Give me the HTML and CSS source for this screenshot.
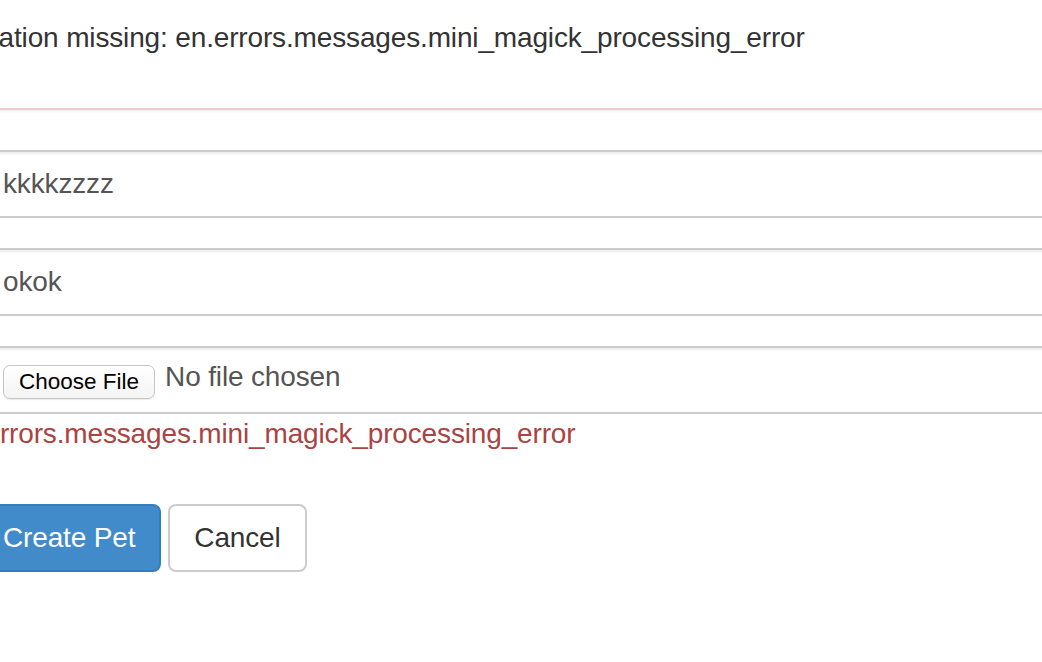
FILE: index.html
```html
<!DOCTYPE html>
<html lang="en">
<head>
<meta charset="utf-8">
<title>New Pet</title>
<link rel="stylesheet" href="styles.css">
</head>
<body>
<div class="container">
  <div class="panel">
    <div class="panel-msg">translation missing: en.errors.messages.mini_magick_processing_error</div>
  </div>
  <form class="pet-form">
    <div class="form-group">
      <input class="form-control" type="text" value="kkkkzzzz">
    </div>
    <div class="form-group">
      <input class="form-control" type="text" value="okok">
    </div>
    <div class="form-group">
      <div class="form-control file-control">
        <button type="button" class="file-btn">Choose File</button>
        <span class="file-name">No file chosen</span>
      </div>
      <div class="help-block">en.errors.messages.mini_magick_processing_error</div>
    </div>
    <div class="actions">
      <button type="button" class="btn btn-primary">Create Pet</button>
      <button type="button" class="btn btn-default">Cancel</button>
    </div>
  </form>
</div>
</body>
</html>
```
FILE: styles.css
```css
html, body {
  margin: 0;
  padding: 0;
  background: #fff;
  overflow: hidden;
}
body {
  font-family: "Liberation Sans", Arial, Helvetica, sans-serif;
  font-size: 28px;
  line-height: 40px;
  color: #333;
  letter-spacing: -0.15px;
}
.container {
  margin-left: -23px;
  width: 1200px;
}
.panel {
  padding: 18px 0 50px;
  border-bottom: 2px solid #ebccd1;
  box-shadow: 0 2px 2px rgba(0, 0, 0, 0.05);
  margin-bottom: 40px;
}
.panel-msg {
  margin-left: -46px;
  white-space: nowrap;
}
.pet-form {
  margin: 0;
}
.form-group {
  margin-bottom: 30px;
}
.form-control {
  display: block;
  box-sizing: border-box;
  width: 100%;
  height: 68px;
  margin: 0;
  padding: 12px 24px;
  border: 2px solid #ccc;
  border-radius: 8px;
  box-shadow: inset 0 2px 2px rgba(0, 0, 0, 0.075);
  font-family: inherit;
  font-size: 28px;
  line-height: 40px;
  letter-spacing: inherit;
  color: #555;
  background: #fff;
  outline: none;
}
.file-control {
  display: flex;
  align-items: center;
}
.file-btn {
  box-sizing: border-box;
  height: 34px;
  padding: 0 15px;
  margin: 4px 0 0;
  border: 1px solid #c6c6c6;
  border-radius: 7px;
  background: linear-gradient(#ffffff, #f4f4f4);
  box-shadow: 0 1px 1px rgba(0, 0, 0, 0.08);
  font-family: inherit;
  font-size: 22.5px;
  line-height: 32px;
  letter-spacing: 0;
  color: #000;
}
.file-name {
  margin-left: 10px;
  margin-bottom: 6px;
}
.help-block {
  margin-left: -31px;
  color: #a94442;
  white-space: nowrap;
}
.actions {
  display: flex;
  gap: 7px;
  margin-top: 50px;
}
.btn {
  box-sizing: border-box;
  height: 68px;
  padding: 12px 24px;
  border: 2px solid transparent;
  border-radius: 8px;
  font-family: inherit;
  font-size: 28px;
  line-height: 40px;
  letter-spacing: inherit;
  cursor: pointer;
}
.btn-primary {
  background: #428bca;
  border-color: #357ebd;
  color: #fff;
}
.btn-default {
  background: #fff;
  border-color: #ccc;
  color: #333;
}
```
